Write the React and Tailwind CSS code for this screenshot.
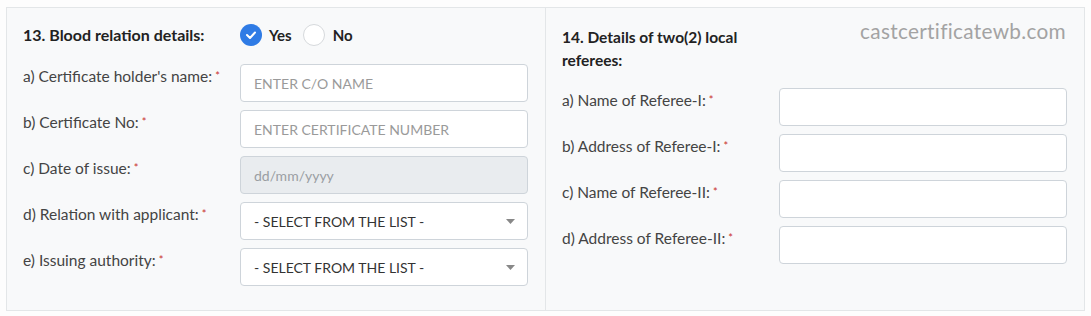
import React from "react";

const font = { fontFamily: "Lato, 'Liberation Sans', sans-serif" };

function Req() {
  return <span className="text-[#c9302c] text-[11px] align-top ml-[3px]">*</span>;
}

function Label({ children }) {
  return (
    <div className="w-[217px] shrink-0 pt-[1px] text-[15.5px] leading-[22px] text-[#444]">
      {children}
      <Req />
    </div>
  );
}

function TextInput({ placeholder, disabled }) {
  return (
    <div
      className={`w-[288px] h-[38px] shrink-0 rounded-[4px] border border-[#ced4da] flex items-center px-[13px] text-[14px] ${
        disabled ? "bg-[#e9ecef] text-[#9a9ea3]" : "bg-white text-[#9a9a9a]"
      }`}
    >
      {placeholder}
    </div>
  );
}

function Select() {
  return (
    <div className="w-[288px] h-[38px] shrink-0 rounded-[4px] border border-[#ced4da] bg-white flex items-center justify-between pl-[13px] pr-[12px] text-[14px] text-[#333]">
      <span>- SELECT FROM THE LIST -</span>
      <svg width="9" height="5" viewBox="0 0 9 5">
        <path d="M0 0 L9 0 L4.5 5 Z" fill="#888" />
      </svg>
    </div>
  );
}

function Row({ label, children }) {
  return (
    <div className="flex mb-[8px]">
      <Label>{label}</Label>
      {children}
    </div>
  );
}

export default function App() {
  return (
    <div style={font} className="w-[1091px] h-[316px] bg-[#fdfdfd] pt-[7px] pl-[6px]">
      <div className="w-[1079px] h-[304px] border border-[#e3e6e8] bg-[#f8f9fa] flex">
        <div className="w-[539px] h-full border-r border-[#e3e6e8] pl-[16px] pt-[16px]">
          <div className="flex items-center h-[22px]">
            <div className="w-[217px] font-bold text-[16px] text-[#222]">13. Blood relation details:</div>
            <div className="flex items-center">
              <span className="w-[22px] h-[22px] rounded-full bg-[#2f7be5] flex items-center justify-center">
                <svg width="12" height="10" viewBox="0 0 12 10">
                  <path d="M2 5 L5 8 L10 2.5" fill="none" stroke="#fff" strokeWidth="2" strokeLinecap="round" strokeLinejoin="round" />
                </svg>
              </span>
              <span className="ml-[7px] font-bold text-[15px] text-[#222]">Yes</span>
              <span className="ml-[11px] w-[22px] h-[22px] rounded-full bg-white border border-[#d6d9dc]"></span>
              <span className="ml-[8px] font-bold text-[15px] text-[#222]">No</span>
            </div>
          </div>
          <div className="mt-[18px]">
            <Row label="a) Certificate holder's name:">
              <TextInput placeholder="ENTER C/O NAME" />
            </Row>
            <Row label="b) Certificate No:">
              <TextInput placeholder="ENTER CERTIFICATE NUMBER" />
            </Row>
            <Row label="c) Date of issue:">
              <TextInput placeholder="dd/mm/yyyy" disabled />
            </Row>
            <Row label="d) Relation with applicant:">
              <Select />
            </Row>
            <Row label="e) Issuing authority:">
              <Select />
            </Row>
          </div>
        </div>
        <div className="relative flex-1 h-full pl-[16px] pt-[18px]">
          <div className="absolute right-[18px] top-[7px] text-[20.8px] text-[#a3a3a3] tracking-[0.3px]">
            castcertificatewb.com
          </div>
          <div className="w-[200px] font-bold text-[15.5px] leading-[23px] text-[#222]">
            14. Details of two(2) local referees:
          </div>
          <div className="mt-[16px]">
            <Row label="a) Name of Referee-I:">
              <TextInput placeholder="" />
            </Row>
            <Row label="b) Address of Referee-I:">
              <TextInput placeholder="" />
            </Row>
            <Row label="c) Name of Referee-II:">
              <TextInput placeholder="" />
            </Row>
            <Row label="d) Address of Referee-II:">
              <TextInput placeholder="" />
            </Row>
          </div>
        </div>
      </div>
    </div>
  );
}
